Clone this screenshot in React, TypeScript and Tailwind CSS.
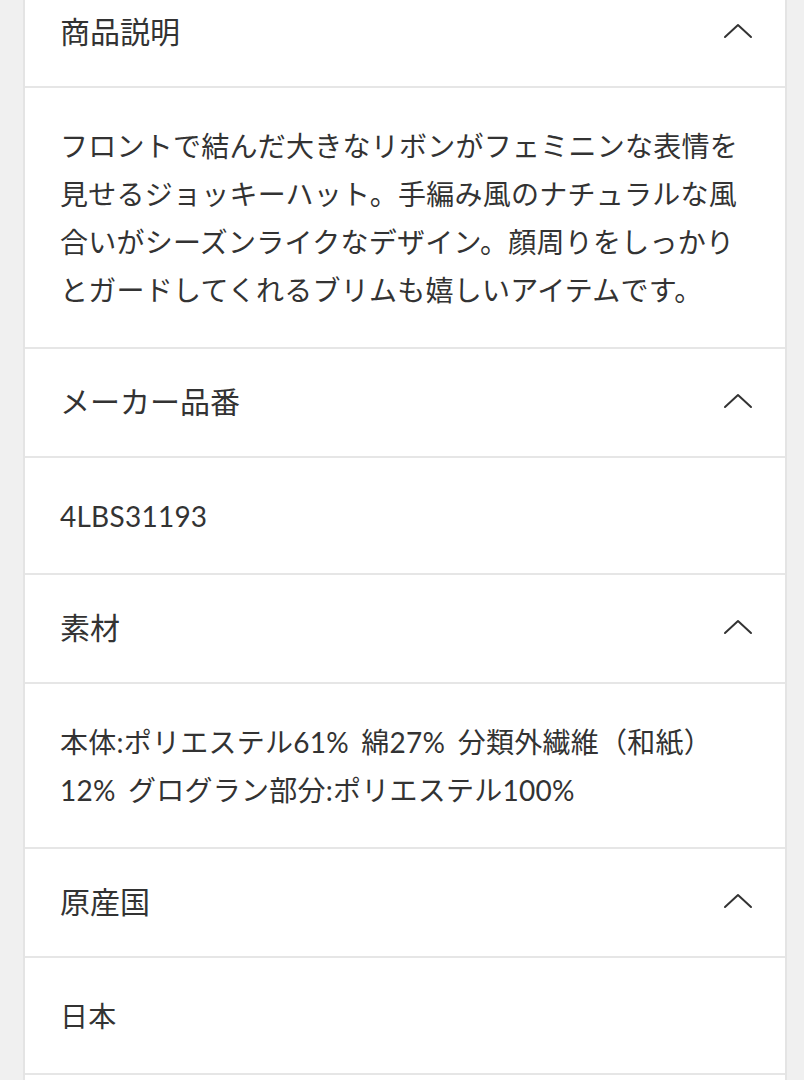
const sections = [
  {
    title: '商品説明',
    lines: [
      'フロントで結んだ大きなリボンがフェミニンな表情を',
      '見せるジョッキーハット。手編み風のナチュラルな風',
      '合いがシーズンライクなデザイン。顔周りをしっかり',
      'とガードしてくれるブリムも嬉しいアイテムです。',
    ],
  },
  { title: 'メーカー品番', lines: ['4LBS31193'] },
  {
    title: '素材',
    lines: ['本体:ポリエステル61% 綿27% 分類外繊維（和紙）', '12% グログラン部分:ポリエステル100%'],
  },
  { title: '原産国', lines: ['日本'] },
];

function ChevronUp() {
  return (
    <svg width="30" height="16" viewBox="0 0 30 16" fill="none" className="text-[#333]">
      <path d="M2 14 L15 2 L28 14" stroke="currentColor" strokeWidth="2" strokeLinecap="round" strokeLinejoin="round" />
    </svg>
  );
}

export default function App() {
  return (
    <div
      className="min-h-[1080px] bg-[#f0f0f0] overflow-hidden"
      style={{ fontFamily: 'Lato, "Noto Sans CJK JP", sans-serif' }}
    >
      <div className="ml-[23px] mr-[17px] -mt-[21px] bg-white border-x-2 border-[#e4e4e4] text-[#333]">
        {sections.map((s) => (
          <div key={s.title}>
            {/* Header */}
            <div className="h-[109px] flex items-center justify-between pl-[35px] pr-[32px] pb-[3px] border-b-2 border-[#e6e6e6]">
              <span className="text-[30px] leading-none">{s.title}</span>
              <ChevronUp />
            </div>
            {/* Body */}
            <div className="pl-[35px] pr-[20px] pt-[34px] pb-[33px] border-b-2 border-[#e6e6e6] text-[28px] leading-[48px] tracking-[0.25px] [word-spacing:5px] whitespace-nowrap">
              {s.lines.map((l) => (
                <div key={l}>{l}</div>
              ))}
            </div>
          </div>
        ))}
        <div className="h-[120px]" />
      </div>
    </div>
  );
}
